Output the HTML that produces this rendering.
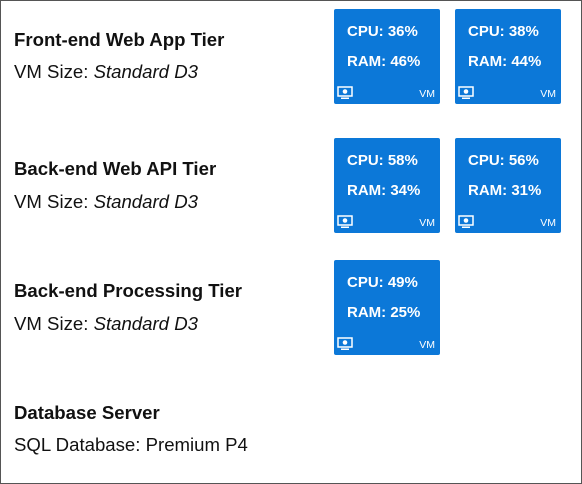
<!DOCTYPE html>
<html><head><style>
body{margin:0;width:582px;height:484px;background:#fff;font-family:"Liberation Sans",sans-serif;position:relative;overflow:hidden}
.frame{position:absolute;left:0;top:0;width:580px;height:482px;border:1px solid #555}
.t{position:absolute;left:14px;font-weight:bold;font-size:18.6px;color:#111}
.s{position:absolute;left:14px;font-size:18.6px;color:#111}
.tile{position:absolute;width:106px;height:95px;background:#0c78d8;border-radius:2px;color:#fff}
.tile .a,.tile .b{position:absolute;left:13px;font-weight:bold;font-size:15px}
.tile .a{top:14px}.tile .b{top:44px}
.tile .vm{position:absolute;right:5px;bottom:4px;font-size:10.5px}
.tile svg{position:absolute;left:3px;bottom:4px}
</style></head><body>
<div class="frame"></div>
<div class="t" style="top:29px">Front-end Web App Tier</div>
<div class="s" style="top:61px">VM Size: <i>Standard D3</i></div>
<div class="t" style="top:158px">Back-end Web API Tier</div>
<div class="s" style="top:191px">VM Size: <i>Standard D3</i></div>
<div class="t" style="top:280px">Back-end Processing Tier</div>
<div class="s" style="top:313px">VM Size: <i>Standard D3</i></div>
<div class="t" style="top:402px">Database Server</div>
<div class="s" style="top:434px">SQL Database: Premium P4</div>

<div class="tile" style="left:334px;top:9px"><div class="a">CPU: 36%</div><div class="b">RAM: 46%</div><svg width="16" height="14" viewBox="0 0 16 14"><rect x="1" y="1" width="14" height="9" fill="none" stroke="#fff" stroke-width="1.5"/><circle cx="8" cy="5.5" r="2.3" fill="#fff"/><rect x="4" y="11.5" width="8" height="1.5" fill="#fff"/></svg><div class="vm">VM</div></div>
<div class="tile" style="left:455px;top:9px"><div class="a">CPU: 38%</div><div class="b">RAM: 44%</div><svg width="16" height="14" viewBox="0 0 16 14"><rect x="1" y="1" width="14" height="9" fill="none" stroke="#fff" stroke-width="1.5"/><circle cx="8" cy="5.5" r="2.3" fill="#fff"/><rect x="4" y="11.5" width="8" height="1.5" fill="#fff"/></svg><div class="vm">VM</div></div>
<div class="tile" style="left:334px;top:138px"><div class="a">CPU: 58%</div><div class="b">RAM: 34%</div><svg width="16" height="14" viewBox="0 0 16 14"><rect x="1" y="1" width="14" height="9" fill="none" stroke="#fff" stroke-width="1.5"/><circle cx="8" cy="5.5" r="2.3" fill="#fff"/><rect x="4" y="11.5" width="8" height="1.5" fill="#fff"/></svg><div class="vm">VM</div></div>
<div class="tile" style="left:455px;top:138px"><div class="a">CPU: 56%</div><div class="b">RAM: 31%</div><svg width="16" height="14" viewBox="0 0 16 14"><rect x="1" y="1" width="14" height="9" fill="none" stroke="#fff" stroke-width="1.5"/><circle cx="8" cy="5.5" r="2.3" fill="#fff"/><rect x="4" y="11.5" width="8" height="1.5" fill="#fff"/></svg><div class="vm">VM</div></div>
<div class="tile" style="left:334px;top:260px"><div class="a">CPU: 49%</div><div class="b">RAM: 25%</div><svg width="16" height="14" viewBox="0 0 16 14"><rect x="1" y="1" width="14" height="9" fill="none" stroke="#fff" stroke-width="1.5"/><circle cx="8" cy="5.5" r="2.3" fill="#fff"/><rect x="4" y="11.5" width="8" height="1.5" fill="#fff"/></svg><div class="vm">VM</div></div>
</body></html>
